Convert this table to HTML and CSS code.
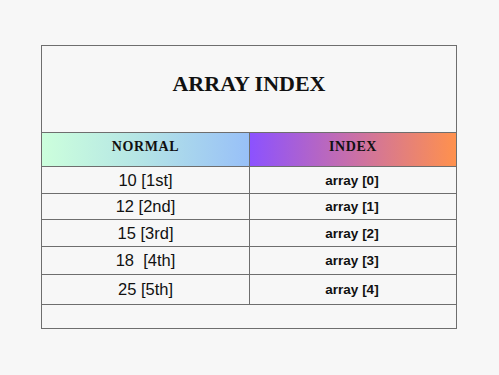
FILE: index.html
```html
<!DOCTYPE html>
<html>
<head>
<meta charset="utf-8">
<link rel="stylesheet" href="styles.css">
</head>
<body>
<div class="card">
  <div class="title">ARRAY INDEX</div>
  <div class="row head h34">
    <div class="cell left grad-a">NORMAL</div>
    <div class="cell grad-b">INDEX</div>
  </div>
  <div class="row h26">
    <div class="cell left num">10 [1st]</div>
    <div class="cell idx">array [0]</div>
  </div>
  <div class="row h25">
    <div class="cell left num">12 [2nd]</div>
    <div class="cell idx">array [1]</div>
  </div>
  <div class="row h26">
    <div class="cell left num">15 [3rd]</div>
    <div class="cell idx">array [2]</div>
  </div>
  <div class="row h27">
    <div class="cell left num">18&nbsp; [4th]</div>
    <div class="cell idx">array [3]</div>
  </div>
  <div class="row h29">
    <div class="cell left num">25 [5th]</div>
    <div class="cell idx">array [4]</div>
  </div>
  <div class="foot"></div>
</div>
</body>
</html>
```
FILE: styles.css
```css
html, body {
  margin: 0;
  padding: 0;
  background: #f7f7f7;
}
body {
  padding: 45px 0 0 41px;
}
.card {
  width: 416px;
  box-sizing: border-box;
  border: 1px solid #6e6e6e;
  background: #f7f7f7;
  display: flex;
  flex-direction: column;
}
.title {
  height: 86px;
  display: flex;
  align-items: center;
  justify-content: center;
  font-family: "Liberation Serif", serif;
  font-weight: bold;
  font-size: 22px;
  color: #111;
  padding-bottom: 10px;
  box-sizing: border-box;
}
.row {
  display: grid;
  grid-template-columns: 208px 1fr;
  border-top: 1px solid #6e6e6e;
}
.h34 { height: 33px; }
.h26 { height: 26px; }
.h25 { height: 25px; }
.h27 { height: 27px; }
.h29 { height: 29px; }
.cell {
  display: flex;
  align-items: center;
  justify-content: center;
  color: #111;
}
.left {
  border-right: 1px solid #6e6e6e;
}
.head .cell {
  font-family: "Liberation Serif", serif;
  font-weight: bold;
  font-size: 14px;
  letter-spacing: 0.6px;
  padding-bottom: 5px;
  box-sizing: border-box;
}
.grad-a {
  background: linear-gradient(90deg, #ccffdc 0%, #b3e3e6 50%, #98c0f8 100%);
}
.grad-b {
  background: linear-gradient(90deg, #8c52ff 0%, #c96fa8 50%, #ff914d 100%);
}
.num {
  font-family: "Liberation Sans", Arial, sans-serif;
  font-size: 16.5px;
}
.idx {
  font-family: "Liberation Sans", Arial, sans-serif;
  font-weight: bold;
  font-size: 13.5px;
  padding-right: 2px;
}
.foot {
  height: 23px;
  border-top: 1px solid #6e6e6e;
}
```
